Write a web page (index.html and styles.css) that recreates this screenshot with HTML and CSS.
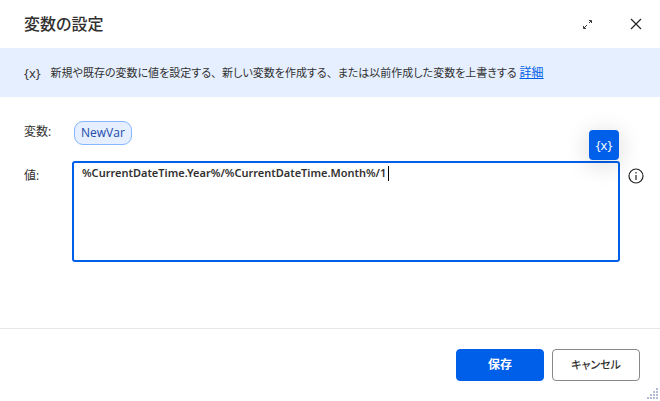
FILE: index.html
```html
<!DOCTYPE html>
<html lang="ja">
<head>
<meta charset="utf-8">
<meta name="viewport" content="width=device-width, initial-scale=1">
<title>変数の設定</title>
<link rel="stylesheet" href="styles.css">
</head>
<body>
<main class="dialog">
  <header class="titlebar">
    <h1 class="title">変数の設定</h1>
    <button class="icon-button" type="button" aria-label="最大化">
      <svg width="12" height="12" viewBox="0 0 12 12" fill="none" stroke="#3b3a39"><path d="M7 5l2-2M7 2.500h2.500v2.500M5 7l-3 3M1.500 8v2.500h2.500"/></svg>
    </button>
    <button class="icon-button" type="button" aria-label="閉じる">
      <svg width="12" height="12" viewBox="0 0 12 12" fill="none" stroke="#242424" stroke-width="1.2"><path d="M1 1l10 10M11 1L1 11"/></svg>
    </button>
  </header>
  <div class="banner">
    <span class="banner-icon">{x}</span>
    <p class="banner-text">新規や既存の変数に値を設定する<span class="comma">、</span>新しい変数を作成する<span class="comma">、</span>または以前作成した変数を上書きする <a href="#details">詳細</a></p>
  </div>
  <form class="form">
    <span class="label" id="variable-label">変数:</span>
    <div><button class="chip" type="button" aria-describedby="variable-label">NewVar</button></div>
    <label class="label" for="value">値:</label>
    <div class="editor">
      <textarea class="value" id="value" spellcheck="false">%CurrentDateTime.Year%/%CurrentDateTime.Month%/1</textarea>
      <span class="caret"></span>
      <button class="picker" type="button" aria-label="変数の選択">{x}</button>
    </div>
    <button class="info" type="button" aria-label="情報">
      <svg width="16" height="16" viewBox="0 0 16 16" fill="none" stroke="#242424"><circle cx="8" cy="8" r="7" stroke-width="1.2"/><path d="M8 7v5M8 4v1.500" stroke-width="1.200"/></svg>
    </button>
  </form>
  <footer class="footer">
    <button class="button primary" type="button">保存</button>
    <button class="button" type="button">キャンセル</button>
  </footer>
  <svg class="grip" width="12" height="12" viewBox="0 0 12 12" fill="#b4bbd6"><path d="M9 0h2v2h-2zM9 3h2v2h-2zM6 3h2v2h-2zM9 6h2v2h-2zM6 6h2v2h-2zM3 6h2v2h-2zM9 9h2v2h-2zM6 9h2v2h-2zM3 9h2v2h-2zM0 9h2v2h-2z"/></svg>
</main>
</body>
</html>
```
FILE: styles.css
```css
* {
  box-sizing: border-box;
}

body {
  margin: 0;
  background: #fff;
  color: #323130;
  font: 12px/16px "Open Sans", "Noto Sans CJK JP", sans-serif;
  font-feature-settings: "palt";
}

button,
textarea {
  font: inherit;
  font-feature-settings: inherit;
  color: inherit;
}

button {
  padding: 0;
  border: 0;
  background: none;
}

svg {
  display: block;
}

.dialog {
  position: relative;
  display: flex;
  flex-direction: column;
  min-height: 100vh;
}

.titlebar {
  display: flex;
  align-items: center;
  height: 48px;
  padding: 0 8px 0 24px;
}

.title {
  flex: 1;
  margin: 0;
  font-size: 16px;
  line-height: 24px;
  font-weight: 500;
}

.icon-button {
  display: grid;
  place-items: center;
  width: 32px;
  height: 32px;
}

.icon-button + .icon-button {
  margin-left: 16px;
}

.banner {
  display: flex;
  align-items: center;
  gap: 10px;
  min-height: 49px;
  padding: 0 24px;
  background: #e5efff;
}

.banner-icon {
  font-size: 13px;
}

.banner-text {
  margin: 0;
  font-size: 11px;
}

.comma {
  font-feature-settings: normal;
}

.banner-text a {
  font-size: 12px;
  color: #005fe8;
}

.form {
  flex: 1;
  display: grid;
  grid-template-columns: 40px 1fr 16px;
  grid-template-rows: 24px 101px;
  gap: 16px 8px;
  padding: 24px 16px 24px 24px;
}

.form > div:nth-of-type(1) {
  grid-column: 2 / 4;
}

.label {
  padding-top: 3px;
}

.form label {
  padding-top: 7px;
}

.chip {
  display: block;
  height: 24px;
  margin-left: 2px;
  padding: 0 6px;
  border: 1px solid #85b6ff;
  border-radius: 9px;
  background: #e5efff;
  color: #1b4aa8;
}

.editor {
  position: relative;
}

.value {
  display: block;
  width: 100%;
  height: 101px;
  padding: 2px 8px;
  border: 2px solid #005fe8;
  border-radius: 3px;
  outline: 0;
  background: #fff;
  font-family: "Noto Sans", sans-serif;
  font-size: 11px;
  font-weight: 600;
  resize: none;
}

.caret {
  position: absolute;
  top: 5px;
  left: 316px;
  width: 1px;
  height: 15px;
  background: #000;
}

.picker {
  position: absolute;
  top: -31px;
  right: 1px;
  width: 30px;
  height: 30px;
  border-radius: 4px;
  background: #005fe8;
  color: #fff;
  font-size: 13px;
  font-weight: 500;
  box-shadow: 0 4px 24px rgba(0, 0, 0, 0.16);
}

.info {
  align-self: start;
  margin-top: 7px;
}

.footer {
  display: flex;
  justify-content: flex-end;
  gap: 8px;
  padding: 20px;
  border-top: 1px solid #e6e6e6;
}

.button {
  width: 88px;
  height: 32px;
  border: 1px solid #8a8886;
  border-radius: 4px;
  font-size: 11px;
  font-weight: 500;
}

.primary {
  border-color: #005fe8;
  background: #005fe8;
  color: #fff;
  font-size: 12px;
  font-weight: 700;
}

.grip {
  position: absolute;
  right: 1px;
  bottom: 1px;
}
```
